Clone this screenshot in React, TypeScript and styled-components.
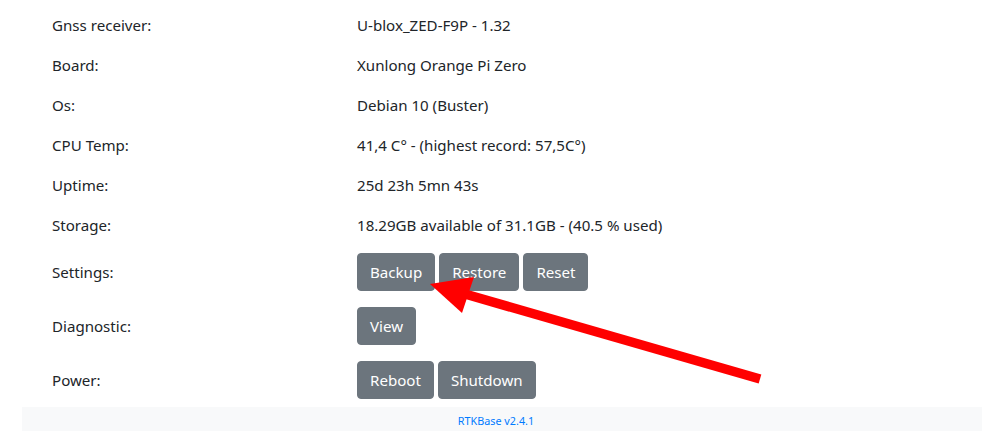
import React from "react";
import styled, { createGlobalStyle } from "styled-components";

const GlobalStyle = createGlobalStyle`
  html, body {
    margin: 0;
    padding: 0;
    background: #fff;
    font-family: "Noto Sans", "Segoe UI", Arial, sans-serif;
    font-size: 15.1px;
    color: #212529;
    overflow: hidden;
  }
`;

type Row = { label: string; value?: string; buttons?: string[] };

const rows: Row[] = [
  { label: "Gnss receiver:", value: "U-blox_ZED-F9P - 1.32" },
  { label: "Board:", value: "Xunlong Orange Pi Zero" },
  { label: "Os:", value: "Debian 10 (Buster)" },
  { label: "CPU Temp:", value: "41,4 C° - (highest record: 57,5C°)" },
  { label: "Uptime:", value: "25d 23h 5mn 43s" },
  { label: "Storage:", value: "18.29GB available of 31.1GB - (40.5 % used)" },
  { label: "Settings:", buttons: ["Backup", "Restore", "Reset"] },
  { label: "Diagnostic:", buttons: ["View"] },
  { label: "Power:", buttons: ["Reboot", "Shutdown"] },
];

const App = () => {
  return (
    <Page>
      <GlobalStyle />
      <Container>
        <InfoTable>
          {rows.map((row) => (
            <InfoRow key={row.label}>
              <Label>{row.label}</Label>
              {row.buttons ? (
                <ButtonGroup>
                  {row.buttons.map((b) => (
                    <SecondaryButton key={b}>{b}</SecondaryButton>
                  ))}
                </ButtonGroup>
              ) : (
                <Value>{row.value}</Value>
              )}
            </InfoRow>
          ))}
        </InfoTable>
        <Footer>
          <FooterLink>RTKBase v2.4.1</FooterLink>
        </Footer>
      </Container>
      <Arrow viewBox="0 0 1003 431" width="1003" height="431">
        <line x1="760" y1="379" x2="465" y2="294" stroke="#ff0000" strokeWidth="9.5" />
        <polygon points="430,284 474,277 462,313" fill="#ff0000" />
      </Arrow>
    </Page>
  );
};

const Page = styled.div`
  position: relative;
  width: 1003px;
  height: 431px;
  padding-top: 5px;
  box-sizing: border-box;
`;

const Container = styled.div`
  width: 960px;
  margin-left: 22px;
`;

const InfoTable = styled.div`
  display: flex;
  flex-direction: column;
`;

const InfoRow = styled.div`
  display: grid;
  grid-template-columns: 305px 1fr;
  align-items: center;
  padding: 8px 0 8px 30px;
  line-height: 24px;
`;

const Label = styled.div``;

const Value = styled.div``;

const ButtonGroup = styled.div`
  display: flex;
  gap: 4px;
`;

const SecondaryButton = styled.button`
  font-family: inherit;
  font-size: 15.1px;
  line-height: 24px;
  padding: 6px 12px;
  border: 1px solid #6c757d;
  border-radius: 4px;
  background: #6c757d;
  color: #fff;
  cursor: pointer;
`;

const Footer = styled.footer`
  background: #f8f9fa;
  height: 30px;
  display: flex;
  justify-content: center;
  padding: 6px 12px 0 0;
  box-sizing: border-box;
`;

const FooterLink = styled.a`
  color: #007bff;
  font-size: 10.8px;
  line-height: 16px;
  text-decoration: none;
`;

const Arrow = styled.svg`
  position: absolute;
  left: 0;
  top: 0;
  pointer-events: none;
`;

export default App;
